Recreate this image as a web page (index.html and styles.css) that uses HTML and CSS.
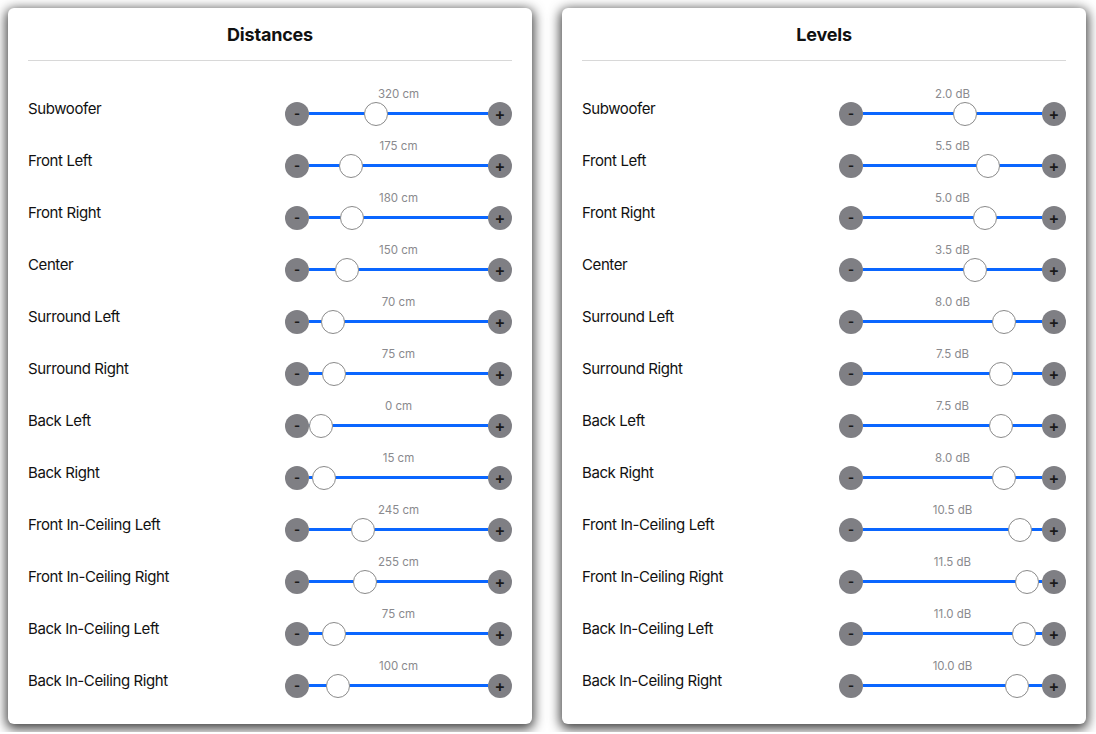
FILE: index.html
```html
<!DOCTYPE html>
<html lang="en">
<head>
  <meta charset="UTF-8" />
  <meta name="viewport" content="width=device-width, initial-scale=1.0"/>
  <title>Speaker Setup</title>
  <link rel="stylesheet" href="styles.css">
</head>
<body>
  <div class="card">
    <h2>Distances</h2>
    <div class="rows" id="distances"></div>
  </div>

  <div class="card">
    <h2>Levels</h2>
    <div class="rows" id="levels"></div>
  </div>

  <script>
    const speakers = [
      "Subwoofer", "Front Left", "Front Right", "Center",
      "Surround Left", "Surround Right", "Back Left", "Back Right",
      "Front In-Ceiling Left", "Front In-Ceiling Right",
      "Back In-Ceiling Left", "Back In-Ceiling Right"
    ];
    const distances = [320, 175, 180, 150, 70, 75, 0, 15, 245, 255, 75, 100];
    const levels = [2.0, 5.5, 5.0, 3.5, 8.0, 7.5, 7.5, 8.0, 10.5, 11.5, 11.0, 10.0];

    function buildRows(id, values, min, max, format) {
      const list = document.getElementById(id);
      values.forEach((v, i) => {
        const frac = (v - min) / (max - min);
        const row = document.createElement("div");
        row.className = "row";
        row.innerHTML =
          `<span class="label">${speakers[i]}</span>` +
          `<div class="control">` +
            `<div class="value">${format(v)}</div>` +
            `<div class="slider">` +
              `<span class="btn minus">-</span>` +
              `<div class="track"><span class="thumb" style="left: calc(${frac.toFixed(4)} * (100% - 24px))"></span></div>` +
              `<span class="btn plus">+</span>` +
            `</div>` +
          `</div>`;
        list.appendChild(row);
      });
    }

    buildRows("distances", distances, 0, 900, v => v + " cm");
    buildRows("levels", levels, -12, 12, v => v.toFixed(1) + " dB");
  </script>
</body>
</html>
```

FILE: styles.css
```css
body {
  margin: 0;
  padding: 8px;
  display: flex;
  gap: 30px;
  background: #fff;
  font-family: Inter, "Liberation Sans", sans-serif;
  color: #111;
}
.card {
  width: 524px;
  height: 716px;
  box-sizing: border-box;
  padding: 15px 20px 0;
  background: #fff;
  border-radius: 6px;
  box-shadow: 0 3px 12px 2px rgba(0, 0, 0, 0.75);
}
h2 {
  margin: 0;
  padding-bottom: 13px;
  font-size: 18px;
  line-height: 24px;
  font-weight: 700;
  letter-spacing: -0.2px;
  text-align: center;
  border-bottom: 1px solid #d8d8d8;
}
.rows {
  padding-top: 21px;
}
.row {
  height: 52px;
  display: flex;
  align-items: center;
  justify-content: space-between;
}
.label {
  font-size: 15px;
  letter-spacing: -0.4px;
}
.control {
  width: 227px;
  margin-bottom: 4px;
}
.value {
  margin: 0 24px 1px;
  font-size: 11.5px;
  line-height: 14px;
  color: #8a8a8e;
  text-align: center;
}
.slider {
  display: flex;
  align-items: center;
  height: 24px;
}
.btn {
  width: 24px;
  height: 24px;
  border-radius: 50%;
  background: #7f7f84;
  color: #1a1a1a;
  display: flex;
  align-items: center;
  justify-content: center;
  font-size: 16px;
  font-weight: 600;
  line-height: 1;
  flex: none;
}
.minus {
  font-weight: 700;
  font-size: 13px;
}
.track {
  flex: 1;
  position: relative;
  height: 24px;
  background: linear-gradient(#0a66ff, #0a66ff) center / 100% 3px no-repeat;
}
.thumb {
  position: absolute;
  top: 0;
  width: 24px;
  height: 24px;
  box-sizing: border-box;
  border-radius: 50%;
  background: #fff;
  border: 1px solid #8a8a8a;
}
```
